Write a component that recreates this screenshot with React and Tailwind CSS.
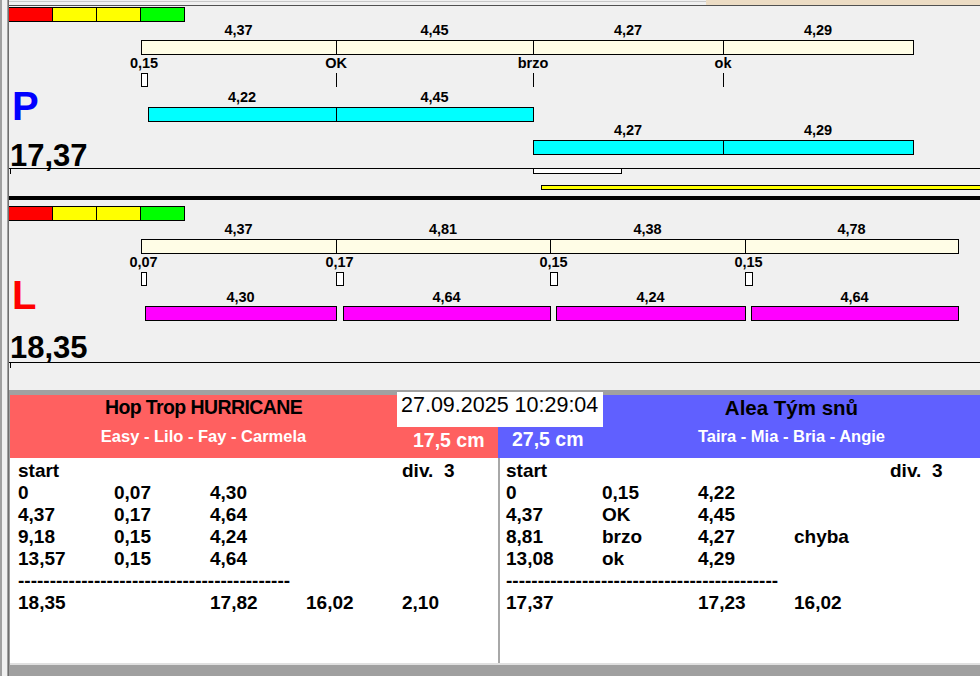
import React from "react";

// page x of the chart canvas' left edge (after the window gutter)
const X0 = 9;

const panelP = {
  barTop: 1,
  top: {
    labelTop: 16,
    barTop: 34,
    segs: [
      [141, 336, "4,37"],
      [336, 533, "4,45"],
      [533, 723, "4,27"],
      [723, 913, "4,29"],
    ],
  },
  marks: {
    labelTop: 49,
    top: 67,
    items: [
      { label: "0,15", box: [141, 147] },
      { label: "OK", line: 336 },
      { label: "brzo", line: 533 },
      { label: "ok", line: 723 },
    ],
  },
  lower: [
    { labelTop: 83, barTop: 101, segs: [[148, 336, "4,22"], [336, 533, "4,45"]] },
    { labelTop: 116, barTop: 134, segs: [[533, 723, "4,27"], [723, 913, "4,29"]] },
  ],
  lowerColor: "bg-[#00ffff]",
  letter: "P",
  letterColor: "text-[#0000ff]",
  letterTop: 80,
  total: "17,37",
  totalTop: 134,
};

const panelL = {
  barTop: 6,
  top: {
    labelTop: 21,
    barTop: 39,
    segs: [
      [141, 336, "4,37"],
      [336, 550, "4,81"],
      [550, 745, "4,38"],
      [745, 958, "4,78"],
    ],
  },
  marks: {
    labelTop: 54,
    top: 72,
    items: [
      { label: "0,07", box: [141, 146] },
      { label: "0,17", box: [336, 343] },
      { label: "0,15", box: [550, 557] },
      { label: "0,15", box: [745, 752] },
    ],
  },
  lower: [
    {
      labelTop: 89,
      barTop: 106,
      segs: [
        [145, 336, "4,30"],
        [343, 550, "4,64"],
        [556, 745, "4,24"],
        [751, 958, "4,64"],
      ],
    },
  ],
  lowerColor: "bg-[#ff00ff]",
  letter: "L",
  letterColor: "text-[#ff0000]",
  letterTop: 75,
  total: "18,35",
  totalTop: 132,
};

function Seg({ x1, x2, top, color }) {
  return (
    <div
      className={`absolute h-[15px] border border-black ${color}`}
      style={{ left: x1 - X0, width: x2 - x1 + 1, top }}
    />
  );
}

function Label({ cx, top, children }) {
  return (
    <div
      className="absolute w-[80px] text-center text-[14.5px] leading-[16px] font-bold"
      style={{ left: cx - X0 - 40, top }}
    >
      {children}
    </div>
  );
}

function ColorBar({ top }) {
  const cls = ["bg-[#ff0000]", "bg-[#ffff00]", "bg-[#ffff00]", "bg-[#00ff00]"];
  return (
    <div className="absolute left-0 flex border-y border-black" style={{ top }}>
      {cls.map((c, i) => (
        <div key={i} className={`w-[44px] h-[13px] border-r border-black ${c}`} />
      ))}
    </div>
  );
}

function Panel({ d, extra }) {
  return (
    <div className="relative h-[190px] overflow-hidden">
      <ColorBar top={d.barTop} />

      {d.top.segs.map(([a, b, t]) => (
        <React.Fragment key={"t" + a}>
          <Label cx={(a + b) / 2} top={d.top.labelTop}>{t}</Label>
          <Seg x1={a} x2={b} top={d.top.barTop} color="bg-[#fffde6]" />
        </React.Fragment>
      ))}

      {d.marks.items.map((m, i) => {
        const cx = m.box ? (m.box[0] + m.box[1]) / 2 : m.line;
        return (
          <React.Fragment key={"m" + i}>
            <Label cx={cx} top={d.marks.labelTop}>{m.label}</Label>
            {m.box ? (
              <div
                className="absolute h-[14px] border border-black bg-white"
                style={{ left: m.box[0] - X0, width: m.box[1] - m.box[0] + 1, top: d.marks.top }}
              />
            ) : (
              <div
                className="absolute w-[1px] h-[14px] bg-black"
                style={{ left: m.line - X0, top: d.marks.top }}
              />
            )}
          </React.Fragment>
        );
      })}

      {d.lower.map((row, ri) =>
        row.segs.map(([a, b, t]) => (
          <React.Fragment key={"l" + ri + a}>
            <Label cx={(a + b) / 2} top={row.labelTop}>{t}</Label>
            <Seg x1={a} x2={b} top={row.barTop} color={d.lowerColor} />
          </React.Fragment>
        ))
      )}

      <div
        className={`absolute left-[3px] text-[40px] leading-[40px] font-bold ${d.letterColor}`}
        style={{ top: d.letterTop }}
      >
        {d.letter}
      </div>
      <div className="absolute left-[1px] text-[31px] leading-[31px] font-bold" style={{ top: d.totalTop }}>
        {d.total}
      </div>

      <div className="absolute left-0 right-0 top-[162px] h-[1px] bg-black" />
      <div className="absolute left-[1px] top-[162px] w-[1px] h-[6px] bg-black" />
      {extra}
    </div>
  );
}

function Chevron({ down }) {
  return (
    <svg width="9" height="6" viewBox="0 0 9 6">
      <path
        d={down ? "M1 1 L4.5 4.5 L8 1" : "M1 5 L4.5 1.5 L8 5"}
        fill="none"
        stroke="#a6a6a6"
        strokeWidth="1.3"
      />
    </svg>
  );
}

function ScoreList({ rows, total, className }) {
  const cols = "grid grid-cols-[96px_96px_96px_96px_96px]";
  return (
    <div className={`flex h-[205px] bg-white ${className}`}>
      <div className="flex-1 pt-[2px] text-[19px] leading-[22px] font-bold whitespace-pre">
        <div className={cols}>
          <span>start</span>
          <span />
          <span />
          <span />
          <span>div.  3</span>
        </div>
        {rows.map((r, i) => (
          <div key={i} className={cols}>
            {r.map((c, j) => (
              <span key={j}>{c}</span>
            ))}
          </div>
        ))}
        <div>{"-".repeat(43)}</div>
        <div className={cols}>
          {total.map((c, j) => (
            <span key={j}>{c}</span>
          ))}
        </div>
      </div>
      <div className="w-[18px] shrink-0 bg-[#f0f0f0] flex flex-col items-center justify-between pt-[7px] pb-[6px]">
        <Chevron />
        <Chevron down />
      </div>
    </div>
  );
}

export default function App() {
  return (
    <div className="w-[980px] h-[676px] flex overflow-hidden bg-[#f0f0f0] text-black font-['Liberation_Sans',Arial,Helvetica,sans-serif]">
      {/* window gutter */}
      <div className="w-[9px] shrink-0 flex">
        <div className="w-[2px] bg-[#a0a0a0]" />
        <div className="w-[5px]" />
        <div className="w-[1px] bg-[#a0a0a0]" />
        <div className="w-[1px] bg-[#6e6e6e]" />
      </div>

      <div className="flex-1 min-w-0 flex flex-col">
        <div className="h-[5px] flex">
          <div className="w-[697px] border-t border-[#c8c8c8] mt-[1px]" />
          <div className="flex-1 bg-[#ecdcc4]" />
        </div>
        <div className="h-[1px] bg-[#505050]" />

        <Panel
          d={panelP}
          extra={
            <>
              <div className="absolute left-[524px] top-[162px] w-[89px] h-[6px] border border-black bg-white" />
              <div className="absolute left-[532px] right-[-2px] top-[179px] h-[5px] border border-black bg-[#ffff00]" />
            </>
          }
        />
        <div className="h-[4px] bg-black" />
        <Panel d={panelL} />

        <div className="relative h-[286px] shrink-0 flex bg-[#a0a0a0] pt-[5px] pl-[1px]">
          {/* left team */}
          <div className="w-[488px] shrink-0 flex flex-col">
            <div className="h-[63px] bg-[#ff6060]">
              <div className="w-[387px] text-center text-[19.5px] leading-[24px] font-bold tracking-[-0.6px]">
                Hop Trop HURRICANE
              </div>
              <div className="flex items-start mt-[7px]">
                <div className="w-[387px] text-center text-white text-[16.5px] leading-[20px] font-bold">
                  Easy - Lilo - Fay - Carmela
                </div>
                <div className="ml-[16px] mt-[2px] text-white text-[19.5px] leading-[24px] font-bold">
                  17,5 cm
                </div>
              </div>
            </div>
            <ScoreList
              className="pl-[8px]"
              rows={[
                ["0", "0,07", "4,30"],
                ["4,37", "0,17", "4,64"],
                ["9,18", "0,15", "4,24"],
                ["13,57", "0,15", "4,64"],
              ]}
              total={["18,35", "", "17,82", "16,02", "2,10"]}
            />
            <div className="h-[2px] bg-[#e0e0e0]" />
          </div>

          {/* right team */}
          <div className="w-[485px] shrink-0 flex flex-col">
            <div className="h-[63px] bg-[#6060ff]">
              <div className="pl-[105px] pt-[1px]">
                <div className="w-[377px] text-center text-[20.5px] leading-[24px] font-bold">Alea Tým snů</div>
              </div>
              <div className="flex items-start mt-[6px]">
                <div className="w-[105px] pl-[14px] mt-[1px] text-white text-[19.5px] leading-[24px] font-bold whitespace-nowrap">
                  27,5 cm
                </div>
                <div className="w-[377px] text-center text-white text-[16.5px] leading-[20px] font-bold">
                  Taira - Mia - Bria - Angie
                </div>
              </div>
            </div>
            <ScoreList
              className="pl-[6px] border-l-2 border-[#a8a8a8]"
              rows={[
                ["0", "0,15", "4,22"],
                ["4,37", "OK", "4,45"],
                ["8,81", "brzo", "4,27", "chyba"],
                ["13,08", "ok", "4,29"],
              ]}
              total={["17,37", "", "17,23", "16,02"]}
            />
            <div className="h-[2px] bg-[#e0e0e0]" />
          </div>

          {/* timestamp */}
          <div className="absolute left-[388px] top-[2px] w-[206px] h-[35px] bg-white pl-[4px] text-[21.5px] leading-[26px] whitespace-nowrap">
            27.09.2025 10:29:04
          </div>
        </div>
      </div>
    </div>
  );
}
